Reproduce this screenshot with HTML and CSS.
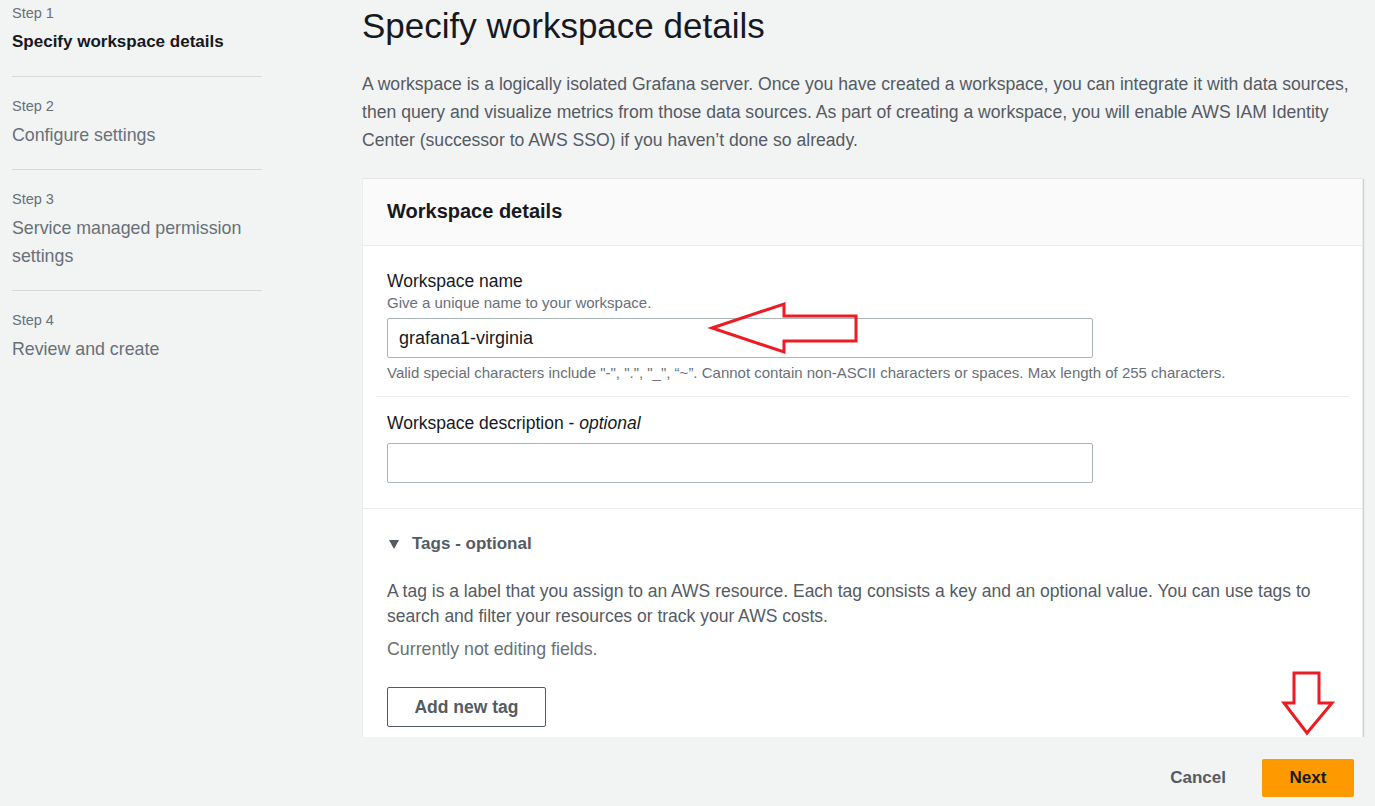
FILE: index.html
```html
<!DOCTYPE html>
<html lang="en">
<head>
<meta charset="utf-8">
<title>Specify workspace details</title>
<link rel="stylesheet" href="styles.css">
</head>
<body>
<div class="page">
  <div class="viewport">
    <nav class="steps">
      <div class="step">
        <div class="step-num">Step 1</div>
        <div class="step-title active">Specify workspace details</div>
      </div>
      <div class="step">
        <div class="step-num">Step 2</div>
        <div class="step-title">Configure settings</div>
      </div>
      <div class="step">
        <div class="step-num">Step 3</div>
        <div class="step-title">Service managed permission settings</div>
      </div>
      <div class="step">
        <div class="step-num">Step 4</div>
        <div class="step-title">Review and create</div>
      </div>
    </nav>
    <main class="main">
      <h1 class="title">Specify workspace details</h1>
      <p class="intro">A workspace is a logically isolated Grafana server. Once you have created a workspace, you can integrate it with data sources, then query and visualize metrics from those data sources. As part of creating a workspace, you will enable AWS IAM Identity Center (successor to AWS SSO) if you haven’t done so already.</p>
      <section class="card">
        <header class="card-header">
          <h2>Workspace details</h2>
        </header>
        <div class="card-body">
          <div class="field">
            <div class="label">Workspace name</div>
            <div class="desc">Give a unique name to your workspace.</div>
            <div class="input">grafana1-virginia</div>
            <div class="constraint">Valid special characters include "-", ".", "_", “~”. Cannot contain non-ASCII characters or spaces. Max length of 255 characters.</div>
          </div>
          <div class="divider"></div>
          <div class="field field-2">
            <div class="label">Workspace description - <i>optional</i></div>
            <div class="input input-2"></div>
          </div>
        </div>
        <div class="tags">
          <div class="tags-head">
            <svg class="caret" width="10" height="9" viewBox="0 0 10 9"><polygon points="0,0 10,0 5,9" fill="#545b64"/></svg>
            <span>Tags - optional</span>
          </div>
          <p class="tags-text">A tag is a label that you assign to an AWS resource. Each tag consists a key and an optional value. You can use tags to search and filter your resources or track your AWS costs.</p>
          <p class="tags-empty">Currently not editing fields.</p>
          <button class="btn-outline">Add new tag</button>
        </div>
      </section>
    </main>
  </div>
  <footer class="footer">
    <button class="btn-link">Cancel</button>
    <button class="btn-primary">Next</button>
  </footer>
  <svg class="annotations" width="1375" height="806" viewBox="0 0 1375 806">
    <polygon points="712,328 784,304 784,316 856,316 856,341 784,341 784,352" fill="none" stroke="#ed1c24" stroke-width="3" stroke-linejoin="miter"/>
    <polygon points="1294,673 1319,673 1319,703 1332,703 1307,733 1284,703 1294,703" fill="#ffffff" stroke="#ed1c24" stroke-width="3" stroke-linejoin="miter"/>
  </svg>
</div>
</body>
</html>
```

FILE: styles.css
```css
* { box-sizing: border-box; }
html, body { margin: 0; padding: 0; }
body {
  background: #f2f3f3;
  font-family: "Liberation Sans", Arial, sans-serif;
  color: #16191f;
}
.page { position: relative; width: 1375px; height: 806px; overflow: hidden; }
.viewport {
  display: flex;
  height: 737px;
  overflow: hidden;
}
.steps {
  width: 262px;
  padding-left: 12px;
  margin-right: 100px;
  flex: none;
}
.step {
  padding: 19px 0 20px;
  border-bottom: 1px solid #d5dbdb;
}
.step:first-child { padding-top: 3px; }
.step:last-child { border-bottom: none; }
.step-num {
  font-size: 14.5px;
  line-height: 20px;
  color: #687078;
}
.step-title {
  font-size: 17.8px;
  line-height: 28px;
  color: #687078;
  margin-top: 5px;
}
.step-title.active { color: #16191f; font-weight: bold; font-size: 17px; }
.main { width: 1001px; flex: none; }
.title {
  margin: 6px 0 0;
  font-size: 35px;
  line-height: 40px;
  font-weight: normal;
  color: #16191f;
}
.intro {
  margin: 24px 0 24px;
  font-size: 17.6px;
  line-height: 28px;
  color: #545b64;
}
.card {
  background: #fff;
  border: 1px solid #eaeded;
  border-top-color: #e4e6e6;
  box-shadow: 1px 1px 1px rgba(0,22,40,0.15);
}
.card-header {
  background: #fafafa;
  border-bottom: 1px solid #eaeded;
  padding: 18px 24px 19px;
}
.card-header h2 {
  margin: 0;
  font-size: 20px;
  line-height: 29px;
  font-weight: bold;
  color: #16191f;
}
.card-body { padding: 24px 13px 25px; border-bottom: 1px solid #eaeded; }
.field { padding: 0 11px; }
.label { font-size: 17.5px; line-height: 22px; color: #16191f; }
.desc { font-size: 15px; line-height: 18px; color: #687078; margin-top: 2px; }
.input {
  width: 706px;
  height: 40px;
  border: 1px solid #aab7b8;
  border-radius: 2px;
  margin-top: 6px;
  padding: 0 11px;
  font-size: 18px;
  line-height: 38px;
  color: #16191f;
  background: #fff;
}
.constraint { font-size: 15px; line-height: 18px; color: #687078; margin-top: 6px; }
.divider { height: 1px; background: #eaeded; margin: 14px 0 15px; }
.input-2 { margin-top: 9px; }
.tags { padding: 24px 24px 40px; }
.tags-head {
  display: flex;
  align-items: center;
  font-size: 17px;
  line-height: 22px;
  font-weight: bold;
  color: #545b64;
}
.caret { margin: 0 13px 0 2px; }
.tags-text {
  margin: 24px 0 0;
  font-size: 17.5px;
  line-height: 25px;
  color: #545b64;
}
.tags-empty {
  margin: 8px 0 0;
  font-size: 17.8px;
  line-height: 24px;
  color: #687078;
}
.btn-outline {
  margin-top: 26px;
  width: 159px;
  height: 40px;
  border: 1px solid #545b64;
  border-radius: 2px;
  background: #fff;
  font-family: inherit;
  font-size: 17.5px;
  font-weight: bold;
  color: #545b64;
}
.footer {
  display: flex;
  justify-content: flex-end;
  align-items: center;
  padding: 22px 21px 0 0;
  gap: 36px;
}
.btn-link {
  border: none;
  background: none;
  font-family: inherit;
  font-size: 17px;
  font-weight: bold;
  color: #545b64;
  padding: 0;
}
.btn-primary {
  width: 92px;
  height: 38px;
  border: none;
  border-radius: 2px;
  background: #ff9900;
  font-family: inherit;
  font-size: 17px;
  font-weight: bold;
  color: #16191f;
}
.annotations { position: absolute; left: 0; top: 0; pointer-events: none; }
```
